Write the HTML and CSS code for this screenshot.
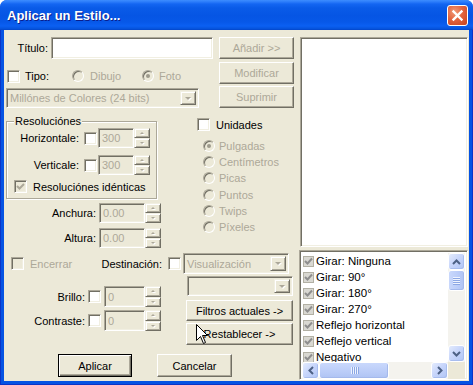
FILE: index.html
```html
<!DOCTYPE html>
<html>
<head>
<meta charset="utf-8">
<link rel="stylesheet" href="styles.css">
</head>
<body>
<div class="window">
  <div class="titlebar">
    <span class="title">Aplicar un Estilo...</span>
    <div class="close"><svg width="13" height="13" viewBox="0 0 13 13"><path d="M2.5 2.5 L10.5 10.5 M10.5 2.5 L2.5 10.5" stroke="#fff" stroke-width="2.4" stroke-linecap="square"/></svg></div>
  </div>
  <div class="frame">
    <div class="client">
      <div class="left">
        <div class="band-a">
          <div class="a-main">
            <div class="row r-title"><span class="lbl l-titulo">Título:</span><div class="edit e-titulo"></div></div>
            <div class="row r-tipo">
              <span class="chk"></span><span class="t-tipo">Tipo:</span>
              <span class="radio"></span><span class="dis t-dibujo">Dibujo</span>
              <span class="radio on"></span><span class="dis t-foto">Foto</span>
            </div>
            <div class="combo c-colores"><span class="ctext dis">Millónes de Colores (24 bits)</span><span class="cbtn"><i class="tri-down"></i></span></div>
          </div>
          <div class="a-btns">
            <button class="btn dis">Añadir &gt;&gt;</button>
            <button class="btn dis b2">Modificar</button>
            <button class="btn dis b3">Suprimir</button>
          </div>
        </div>

        <div class="band-b">
          <div class="b-left">
            <div class="group">
              <span class="legend">Resoluciónes</span>
              <div class="row g-row">
                <span class="lbl l-res">Horizontale:</span><span class="chk g-chk"></span>
                <div class="edit dised e-res"><span class="dis">300</span></div>
                <div class="spin"><span class="sb"><i class="tri-up"></i></span><span class="sb"><i class="tri-dn"></i></span></div>
              </div>
              <div class="row g-row r-vert">
                <span class="lbl l-res">Verticale:</span><span class="chk g-chk"></span>
                <div class="edit dised e-res"><span class="dis">300</span></div>
                <div class="spin"><span class="sb"><i class="tri-up"></i></span><span class="sb"><i class="tri-dn"></i></span></div>
              </div>
              <div class="row r-ident">
                <span class="chk disbox ident-chk"><svg width="9" height="9" viewBox="0 0 9 9"><path d="M1 4 L3.5 6.5 L8 2" fill="none" stroke="#ACA899" stroke-width="2"/></svg></span>
                <span class="t-ident">Resoluciónes idénticas</span>
              </div>
            </div>
            <div class="row r-dim">
              <span class="lbl l-dim">Anchura:</span>
              <div class="edit dised e-dim"><span class="dis">0.00</span></div>
              <div class="spin"><span class="sb"><i class="tri-up"></i></span><span class="sb"><i class="tri-dn"></i></span></div>
            </div>
            <div class="row r-dim r-alt">
              <span class="lbl l-dim">Altura:</span>
              <div class="edit dised e-dim"><span class="dis">0.00</span></div>
              <div class="spin"><span class="sb"><i class="tri-up"></i></span><span class="sb"><i class="tri-dn"></i></span></div>
            </div>
          </div>
          <div class="units">
            <div class="row r-unid"><span class="chk"></span><span class="t-unid">Unidades</span></div>
            <div class="radios">
              <div class="row r-rad"><span class="radio on"></span><span class="dis">Pulgadas</span></div>
              <div class="row r-rad"><span class="radio"></span><span class="dis">Centímetros</span></div>
              <div class="row r-rad"><span class="radio"></span><span class="dis">Picas</span></div>
              <div class="row r-rad"><span class="radio"></span><span class="dis">Puntos</span></div>
              <div class="row r-rad"><span class="radio"></span><span class="dis">Twips</span></div>
              <div class="row r-rad"><span class="radio"></span><span class="dis">Píxeles</span></div>
            </div>
          </div>
        </div>

        <div class="band-c">
          <div class="row r-dest">
            <span class="chk disbox enc-chk"></span><span class="dis t-enc">Encerrar</span>
            <span class="lbl l-dest">Destinación:</span><span class="chk dest-chk"></span>
            <div class="combo c-vis"><span class="ctext dis">Visualización</span><span class="cbtn"><i class="tri-down"></i></span></div>
          </div>
          <div class="c-mid">
            <div class="c-left">
              <div class="row r-bc">
                <span class="lbl l-bc">Brillo:</span><span class="chk bc-chk"></span>
                <div class="edit dised e-bc"><span class="dis">0</span></div>
                <div class="spin"><span class="sb"><i class="tri-up"></i></span><span class="sb"><i class="tri-dn"></i></span></div>
              </div>
              <div class="row r-bc r-con">
                <span class="lbl l-bc">Contraste:</span><span class="chk bc-chk"></span>
                <div class="edit dised e-bc"><span class="dis">0</span></div>
                <div class="spin"><span class="sb"><i class="tri-up"></i></span><span class="sb"><i class="tri-dn"></i></span></div>
              </div>
            </div>
            <div class="c-right">
              <div class="combo c-empty"><span class="ctext"></span><span class="cbtn"><i class="tri-down"></i></span></div>
              <button class="btn b-filt">Filtros actuales -&gt;</button>
              <button class="btn b-rest">Restablecer -&gt;</button>
            </div>
          </div>
          <div class="row r-ok">
            <button class="btn def b-apl">Aplicar</button>
            <button class="btn b-can">Cancelar</button>
          </div>
        </div>
      </div>

      <div class="right">
        <div class="list tlist"></div>
        <div class="list blist">
          <div class="items">
            <div class="item"><span class="lchk"><svg width="9" height="9" viewBox="0 0 9 9"><path d="M1 4 L3.5 6.5 L8 1.5" fill="none" stroke="#8E8E8E" stroke-width="2"/></svg></span>Girar: Ninguna</div>
            <div class="item"><span class="lchk"><svg width="9" height="9" viewBox="0 0 9 9"><path d="M1 4 L3.5 6.5 L8 1.5" fill="none" stroke="#8E8E8E" stroke-width="2"/></svg></span>Girar: 90°</div>
            <div class="item"><span class="lchk"><svg width="9" height="9" viewBox="0 0 9 9"><path d="M1 4 L3.5 6.5 L8 1.5" fill="none" stroke="#8E8E8E" stroke-width="2"/></svg></span>Girar: 180°</div>
            <div class="item"><span class="lchk"><svg width="9" height="9" viewBox="0 0 9 9"><path d="M1 4 L3.5 6.5 L8 1.5" fill="none" stroke="#8E8E8E" stroke-width="2"/></svg></span>Girar: 270°</div>
            <div class="item"><span class="lchk"><svg width="9" height="9" viewBox="0 0 9 9"><path d="M1 4 L3.5 6.5 L8 1.5" fill="none" stroke="#8E8E8E" stroke-width="2"/></svg></span>Reflejo horizontal</div>
            <div class="item"><span class="lchk"><svg width="9" height="9" viewBox="0 0 9 9"><path d="M1 4 L3.5 6.5 L8 1.5" fill="none" stroke="#8E8E8E" stroke-width="2"/></svg></span>Reflejo vertical</div>
            <div class="item"><span class="lchk"><svg width="9" height="9" viewBox="0 0 9 9"><path d="M1 4 L3.5 6.5 L8 1.5" fill="none" stroke="#8E8E8E" stroke-width="2"/></svg></span>Negativo</div>
          </div>
          <div class="vscroll">
            <span class="sbtn"><svg width="9" height="6" viewBox="0 0 9 6"><path d="M1 5 L4.5 1.5 L8 5" fill="none" stroke="#4D6185" stroke-width="2"/></svg></span>
            <span class="vthumb"><i></i><i></i><i></i><i></i></span>
            <span class="vtrack"></span>
            <span class="sbtn"><svg width="9" height="6" viewBox="0 0 9 6"><path d="M1 1 L4.5 4.5 L8 1" fill="none" stroke="#4D6185" stroke-width="2"/></svg></span>
          </div>
          <div class="hscroll">
            <span class="sbtn"><svg width="6" height="9" viewBox="0 0 6 9"><path d="M5 1 L1.5 4.5 L5 8" fill="none" stroke="#4D6185" stroke-width="2"/></svg></span>
            <span class="hthumb"><i></i><i></i><i></i><i></i></span>
            <span class="htrack"></span>
            <span class="sbtn"><svg width="6" height="9" viewBox="0 0 6 9"><path d="M1 1 L4.5 4.5 L1 8" fill="none" stroke="#4D6185" stroke-width="2"/></svg></span>
          </div>
          <div class="corner"></div>
        </div>
      </div>
    </div>
  </div>
  <svg class="cursor" width="13" height="21" viewBox="0 0 13 21"><path d="M0.5 0.5 L0.5 16.5 L4.5 12.5 L7.5 19.5 L9.5 18.5 L6.5 11.5 L11.5 11.5 Z" fill="#fff" stroke="#000" stroke-width="1"/></svg>
</div>
</body>
</html>
```

FILE: styles.css
```css
html, body { margin: 0; padding: 0; background: #fff; }
body { font: 11px "Liberation Sans", Arial, sans-serif; color: #000; }

.window {
  position: relative;
  width: 473px; height: 385px;
  display: flex; flex-direction: column;
  border-radius: 7px 7px 0 0;
  overflow: hidden;
  background: #0553E3;
}

.titlebar {
  height: 30px; flex: none;
  display: flex; align-items: center; justify-content: space-between;
  padding: 0 5px 0 7px;
  background: linear-gradient(#3D8DFF 0, #2A7BFA 2px, #1466F2 4px, #0A5BE8 8px, #0655E4 16px, #0758E8 22px, #0B60F2 26px, #0552DA 29px, #0343C6 30px);
}
.title {
  color: #fff; font: bold 13px "Liberation Sans", Arial, sans-serif;
  text-shadow: 1px 1px 0 #0A1E8C;
  margin-top: 1px;
}
.close {
  width: 21px; height: 21px; box-sizing: border-box;
  border: 1px solid #fff; border-radius: 3px;
  background: radial-gradient(circle at 35% 30%, #F09A78 0, #E2643F 45%, #C8411C 100%);
  display: flex; align-items: center; justify-content: center;
  margin-top: 1px;
}

.frame {
  flex: 1; display: flex;
  padding: 0 4px 4px 4px;
  background: #0553E3;
  box-shadow: inset 1px 0 #0A34C8, inset -1px 0 #0A34C8, inset 0 -1px #0A34C8;
}
.client {
  flex: 1; display: flex;
  background: #ECE9D8;
  overflow: hidden;
}

/* generic */
.row { display: flex; align-items: center; }
.dis { color: #ACA899; }
.lbl { text-align: right; flex: none; }
.chk {
  width: 13px; height: 13px; box-sizing: border-box; flex: none;
  background: #fff;
  border: 1px solid; border-color: #ACA899 #fff #fff #ACA899;
  box-shadow: inset 1px 1px 0 #716F64, inset -1px -1px 0 #F1EFE2;
  display: flex; align-items: center; justify-content: center;
}
.chk.disbox { background: #ECE9D8; }
.radio {
  width: 12px; height: 12px; box-sizing: border-box; flex: none;
  border-radius: 50%;
  border: 1px solid; border-color: #ACA899 #fff #fff #ACA899;
  box-shadow: inset 1px 1px 0 #716F64;
  background: #ECE9D8;
  display: flex; align-items: center; justify-content: center;
}
.radio.on::after { content: ""; width: 4px; height: 4px; border-radius: 50%; background: #9D9A8C; }

.edit {
  box-sizing: border-box; flex: none;
  background: #fff;
  border: 1px solid; border-color: #ACA899 #fff #fff #ACA899;
  box-shadow: inset 1px 1px 0 #716F64, inset -1px -1px 0 #F1EFE2;
  display: flex; align-items: center;
  padding-left: 3px;
}
.edit.dised { background: #ECE9D8; }

.btn {
  box-sizing: border-box; display: flex; align-items: center; justify-content: center;
  margin: 0; padding: 0;
  font: 11px "Liberation Sans", Arial, sans-serif; color: #000;
  background: #ECE9D8;
  border: 1px solid; border-color: #fff #716F64 #716F64 #fff;
  box-shadow: inset -1px -1px 0 #ACA899;
}
.btn.dis { color: #ACA899; }
.btn.def {
  border: 1px solid #000;
  box-shadow: inset 1px 1px 0 #fff, inset -1px -1px 0 #716F64, inset -2px -2px 0 #ACA899;
}

.spin { width: 16px; height: 20px; display: flex; flex-direction: column; flex: none; }
.sb {
  flex: 1; box-sizing: border-box;
  background: #ECE9D8;
  border: 1px solid; border-color: #F1EFE2 #716F64 #716F64 #F1EFE2;
  box-shadow: inset 1px 1px 0 #fff, inset -1px -1px 0 #ACA899;
  display: flex; align-items: center; justify-content: center;
}
.tri-up, .tri-dn, .tri-down { display: block; width: 0; height: 0; filter: drop-shadow(1px 1px 0 #fff); }
.tri-up { border-left: 2px solid transparent; border-right: 2px solid transparent; border-bottom: 2px solid #ACA899; }
.tri-dn { border-left: 2px solid transparent; border-right: 2px solid transparent; border-top: 2px solid #ACA899; }
.tri-down { border-left: 3px solid transparent; border-right: 3px solid transparent; border-top: 3px solid #ACA899; }

.combo {
  box-sizing: border-box; flex: none;
  background: #ECE9D8;
  border: 1px solid; border-color: #ACA899 #fff #fff #ACA899;
  box-shadow: inset 1px 1px 0 #716F64, inset -1px -1px 0 #F1EFE2;
  display: flex; align-items: stretch;
  padding: 2px;
}
.ctext { flex: 1; display: flex; align-items: center; padding-left: 1px; }
.cbtn {
  width: 16px; flex: none; box-sizing: border-box;
  background: #ECE9D8;
  border: 1px solid; border-color: #F1EFE2 #716F64 #716F64 #F1EFE2;
  box-shadow: inset 1px 1px 0 #fff, inset -1px -1px 0 #ACA899;
  display: flex; align-items: center; justify-content: center;
}

/* left column */
.left { width: 292px; flex: none; display: flex; flex-direction: column; }

.band-a { display: flex; margin-top: 7px; height: 71px; }
.a-main { margin-left: 2px; width: 207px; display: flex; flex-direction: column; }
.r-title { height: 22px; }
.l-titulo { width: 42px; margin-right: 3px; }
.e-titulo { width: 162px; height: 22px; }
.r-tipo { height: 16px; margin-top: 9px; }
.r-tipo .chk { margin-left: 1px; }
.t-tipo { width: 47px; margin-left: 5px; }
.t-dibujo { width: 52px; margin-left: 6px; }
.t-foto { margin-left: 5px; }
.c-colores { width: 193px; height: 20px; margin-top: 4px; }

.a-btns { margin-left: 6px; width: 75px; display: flex; flex-direction: column; }
.a-btns .btn { height: 22px; width: 75px; }
.a-btns .b2 { margin-top: 3px; }
.a-btns .b3 { margin-top: 2px; }

.band-b { display: flex; margin-top: 6px; }
.b-left { margin-left: 2px; width: 155px; display: flex; flex-direction: column; }
.group {
  position: relative;
  margin-top: 7px;
  width: 151px; height: 78px; box-sizing: border-box;
  border: 1px solid #ACA899;
  box-shadow: inset 1px 1px 0 #fff, 1px 1px 0 #fff;
  padding-top: 6px;
}
.legend {
  position: absolute; left: 7px; top: -7px;
  padding: 0 1px; background: #ECE9D8; line-height: 13px;
}
.g-row { height: 20px; }
.l-res { width: 72px; }
.g-chk { margin-left: 5px; }
.e-res { width: 36px; height: 20px; margin-left: 1px; }
.r-vert { margin-top: 7px; }
.r-ident { height: 15px; margin-top: 4px; }
.ident-chk { margin-left: 7px; }
.t-ident { margin-left: 6px; }

.r-dim { height: 20px; margin-top: 4px; }
.r-alt { margin-top: 5px; }
.l-dim { width: 90px; margin-right: 3px; }
.e-dim { width: 46px; height: 20px; }

.units { margin-left: 36px; padding-top: 4px; display: flex; flex-direction: column; }
.r-unid { height: 13px; }
.t-unid { margin-left: 6px; }
.radios { margin-top: 7px; display: flex; flex-direction: column; }
.r-rad { height: 16.2px; }
.r-rad .radio { margin-left: 6px; margin-right: 4px; }

.band-c { display: flex; flex-direction: column; margin-top: 5px; }
.r-dest { height: 21px; }
.enc-chk { margin-left: 7px; }
.t-enc { width: 70px; margin-left: 6px; }
.l-dest { width: 62px; margin-left: 0; }
.dest-chk { margin-left: 6px; }
.c-vis { width: 106px; height: 21px; margin-left: 2px; }

.c-mid { display: flex; margin-top: 2px; }
.c-left { width: 157px; padding-top: 10px; display: flex; flex-direction: column; }
.r-bc { height: 21px; }
.r-con { margin-top: 3px; }
.l-bc { width: 81px; }
.bc-chk { margin-left: 3px; }
.e-bc { width: 41px; height: 21px; margin-left: 3px; }
.r-bc .spin { height: 21px; }
.c-right { margin-left: 25px; display: flex; flex-direction: column; }
.c-empty { width: 106px; height: 20px; margin-left: 1px; }
.b-filt { width: 107px; height: 21px; margin-top: 4px; }
.b-rest { width: 107px; height: 22px; margin-top: 2px; }

.r-ok { margin-top: 9px; height: 23px; }
.b-apl { width: 74px; height: 23px; margin-left: 54px; }
.b-can { width: 75px; height: 23px; margin-left: 25px; }

/* right column */
.right { flex: 1; display: flex; flex-direction: column; }
.list {
  box-sizing: border-box;
  background: #fff;
  border: 1px solid; border-color: #ACA899 #fff #fff #ACA899;
  box-shadow: inset 1px 1px 0 #716F64, inset -1px -1px 0 #F1EFE2;
}
.tlist { margin: 7px 0 0 4px; width: 168px; height: 210px; }
.blist {
  margin: 3px 0 0 3px; width: 169px; height: 130px;
  padding: 2px;
  display: grid;
  grid-template-columns: 1fr 17px;
  grid-template-rows: 109px 17px;
}
.items { overflow: hidden; }
.item { height: 16px; display: flex; align-items: center; font-size: 11.5px; white-space: nowrap; }
.lchk {
  width: 11px; height: 11px; box-sizing: border-box;
  margin: 0 2px 0 1px;
  background: #D9D8D2; border: 1px solid #B2B0A4;
  display: flex; align-items: center; justify-content: center;
}

.vscroll { display: flex; flex-direction: column; background: #F4F3EE; }
.hscroll { display: flex; background: #F4F3EE; }
.corner { background: #ECE9D8; }
.sbtn {
  flex: none; width: 17px; height: 17px; box-sizing: border-box;
  border: 1px solid #fff; border-radius: 3px;
  background: linear-gradient(135deg, #E3EBFD 0%, #C8D6FB 45%, #B0C5F5 100%);
  box-shadow: inset -1px -1px 0 #A8BDEE;
  display: flex; align-items: center; justify-content: center;
}
.vthumb, .hthumb {
  flex: none; box-sizing: border-box;
  border: 1px solid #fff; border-radius: 3px;
  background: linear-gradient(90deg, #C9D8FC 0%, #BACCF8 60%, #AFC3F3 100%);
  box-shadow: inset -1px -1px 0 #A4B9EC;
  display: flex; align-items: center; justify-content: center;
}
.vthumb { width: 17px; height: 21px; flex-direction: column; gap: 1px; }
.vthumb i { display: block; width: 7px; height: 1px; background: #EEF3FE; box-shadow: 0 1px 0 #8CA7E4; }
.hthumb { height: 17px; width: 70px; gap: 1px; background: linear-gradient(180deg, #C9D8FC 0%, #BACCF8 60%, #AFC3F3 100%); }
.hthumb i { display: block; width: 1px; height: 7px; background: #EEF3FE; box-shadow: 1px 0 0 #8CA7E4; }
.vtrack, .htrack { flex: 1; }

.cursor { position: absolute; left: 196px; top: 324px; }
```
